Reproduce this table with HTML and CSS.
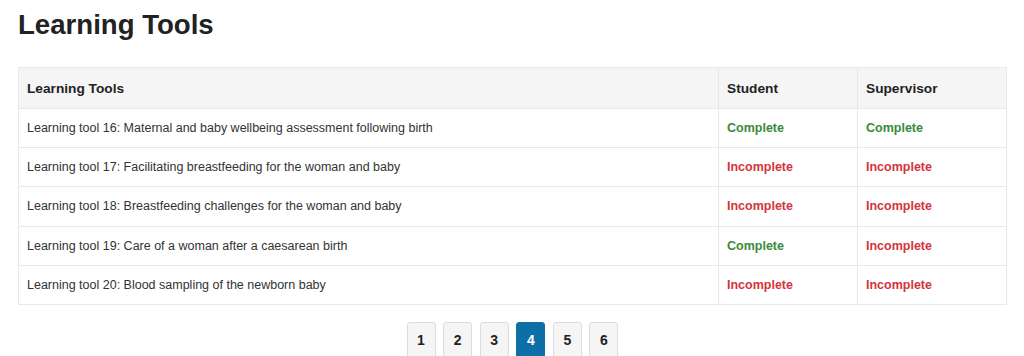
FILE: index.html
```html
<!DOCTYPE html>
<html>
<head>
<meta charset="utf-8">
<link rel="stylesheet" href="styles.css">
</head>
<body>
<div class="page">
  <h1 class="title">Learning Tools</h1>
  <table class="tools">
    <thead>
      <tr><th class="c-name">Learning Tools</th><th class="c-st">Student</th><th class="c-sv">Supervisor</th></tr>
    </thead>
    <tbody>
      <tr><td>Learning tool 16: Maternal and baby wellbeing assessment following birth</td><td class="ok">Complete</td><td class="ok">Complete</td></tr>
      <tr><td>Learning tool 17: Facilitating breastfeeding for the woman and baby</td><td class="no">Incomplete</td><td class="no">Incomplete</td></tr>
      <tr><td>Learning tool 18: Breastfeeding challenges for the woman and baby</td><td class="no">Incomplete</td><td class="no">Incomplete</td></tr>
      <tr><td>Learning tool 19: Care of a woman after a caesarean birth</td><td class="ok">Complete</td><td class="no">Incomplete</td></tr>
      <tr><td>Learning tool 20: Blood sampling of the newborn baby</td><td class="no">Incomplete</td><td class="no">Incomplete</td></tr>
    </tbody>
  </table>
  <nav class="pager">
    <a class="pg">1</a><a class="pg">2</a><a class="pg">3</a><a class="pg active">4</a><a class="pg">5</a><a class="pg">6</a>
  </nav>
</div>
</body>
</html>
```
FILE: styles.css
```css
html, body {
  margin: 0;
  padding: 0;
  background: #fff;
}
body {
  font-family: "Liberation Sans", Arial, sans-serif;
  color: #333;
}
.page {
  padding: 0 17px 0 18px;
}
.title {
  margin: 0;
  padding-top: 8px;
  height: 67px;
  box-sizing: border-box;
  font-size: 27.6px;
  line-height: 34px;
  font-weight: bold;
  color: #222;
}
.tools {
  width: 989px;
  border-collapse: collapse;
  border: 1px solid #e6e6e6;
  font-size: 12.5px;
}
.tools th, .tools td {
  border: 1px solid #e9e9e9;
  text-align: left;
  padding: 0 8px;
}
.tools th {
  background: #f5f5f5;
  height: 40px;
  font-size: 13.7px;
  font-weight: bold;
  color: #222;
}
.tools td {
  height: 38.2px;
  color: #333;
}
.c-name { width: 683px; }
.c-st { width: 122px; }
.tools td.ok { color: #3b8a3b; font-weight: bold; }
.tools td.no { color: #d3343b; font-weight: bold; }
.pager {
  display: flex;
  justify-content: center;
  gap: 7.6px;
  margin-top: 17px;
}
.pg {
  display: flex;
  align-items: center;
  justify-content: center;
  width: 29px;
  height: 36px;
  box-sizing: border-box;
  border: 1px solid #dcdcdc;
  border-radius: 3px;
  background: #f5f5f5;
  font-size: 14px;
  font-weight: bold;
  color: #222;
}
.pg.active {
  background: #0e6fa7;
  border-color: #0e6fa7;
  color: #fff;
}
```
